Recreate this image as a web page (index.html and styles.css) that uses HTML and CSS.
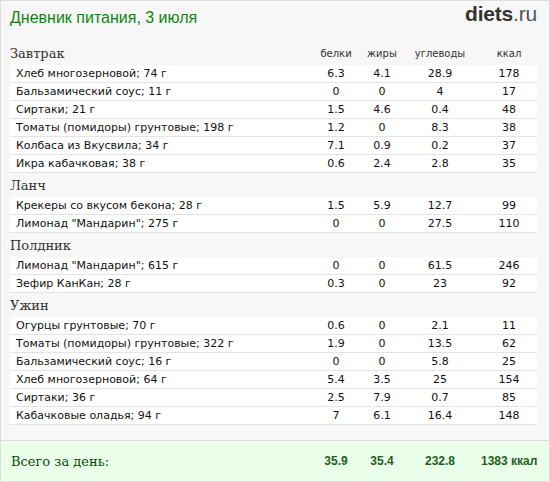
FILE: index.html
```html
<!DOCTYPE html>
<html lang="ru">
<head>
<meta charset="utf-8">
<title>Дневник питания</title>
<link rel="stylesheet" href="styles.css">
</head>
<body>
<div class="page">
  <div class="top">
    <div class="title">Дневник питания, 3 июля</div>
    <div class="logo"><b>diets</b>.ru</div>
  </div>
  <div class="content">
    <div class="head">
      <div class="meal">Завтрак</div>
      <div class="lbl">белки</div><div class="lbl">жиры</div><div class="lbl">углеводы</div><div class="lbl c4">ккал</div>
    </div>
    <div class="row"><div class="name">Хлеб многозерновой; 74 г</div><div>6.3</div><div>4.1</div><div>28.9</div><div class="c4">178</div></div>
    <div class="row"><div class="name">Бальзамический соус; 11 г</div><div>0</div><div>0</div><div>4</div><div class="c4">17</div></div>
    <div class="row"><div class="name">Сиртаки; 21 г</div><div>1.5</div><div>4.6</div><div>0.4</div><div class="c4">48</div></div>
    <div class="row"><div class="name">Томаты (помидоры) грунтовые; 198 г</div><div>1.2</div><div>0</div><div>8.3</div><div class="c4">38</div></div>
    <div class="row"><div class="name">Колбаса из Вкусвила; 34 г</div><div>7.1</div><div>0.9</div><div>0.2</div><div class="c4">37</div></div>
    <div class="row"><div class="name">Икра кабачковая; 38 г</div><div>0.6</div><div>2.4</div><div>2.8</div><div class="c4">35</div></div>

    <div class="head"><div class="meal">Ланч</div></div>
    <div class="row"><div class="name">Крекеры со вкусом бекона; 28 г</div><div>1.5</div><div>5.9</div><div>12.7</div><div class="c4">99</div></div>
    <div class="row"><div class="name">Лимонад "Мандарин"; 275 г</div><div>0</div><div>0</div><div>27.5</div><div class="c4">110</div></div>

    <div class="head"><div class="meal">Полдник</div></div>
    <div class="row"><div class="name">Лимонад "Мандарин"; 615 г</div><div>0</div><div>0</div><div>61.5</div><div class="c4">246</div></div>
    <div class="row"><div class="name">Зефир КанКан; 28 г</div><div>0.3</div><div>0</div><div>23</div><div class="c4">92</div></div>

    <div class="head"><div class="meal">Ужин</div></div>
    <div class="row"><div class="name">Огурцы грунтовые; 70 г</div><div>0.6</div><div>0</div><div>2.1</div><div class="c4">11</div></div>
    <div class="row"><div class="name">Томаты (помидоры) грунтовые; 322 г</div><div>1.9</div><div>0</div><div>13.5</div><div class="c4">62</div></div>
    <div class="row"><div class="name">Бальзамический соус; 16 г</div><div>0</div><div>0</div><div>5.8</div><div class="c4">25</div></div>
    <div class="row"><div class="name">Хлеб многозерновой; 64 г</div><div>5.4</div><div>3.5</div><div>25</div><div class="c4">154</div></div>
    <div class="row"><div class="name">Сиртаки; 36 г</div><div>2.5</div><div>7.9</div><div>0.7</div><div class="c4">85</div></div>
    <div class="row"><div class="name">Кабачковые оладья; 94 г</div><div>7</div><div>6.1</div><div>16.4</div><div class="c4">148</div></div>
  </div>
  <div class="total">
    <div class="total-label">Всего за день:</div>
    <div>35.9</div><div>35.4</div><div>232.8</div><div class="c4">1383 ккал</div>
  </div>
</div>
</body>
</html>
```

FILE: styles.css
```css
html, body {
  margin: 0;
  padding: 0;
}
body {
  width: 550px;
  height: 482px;
  background: #ffffff;
}
.page {
  box-sizing: border-box;
  width: 550px;
  height: 482px;
  border: 1px solid #dedede;
  background: #f7f7f7;
  display: flex;
  flex-direction: column;
}
.top {
  height: 40px;
  display: flex;
  justify-content: space-between;
  align-items: flex-start;
  padding: 0 12px 0 9px;
}
.title {
  font-family: "Liberation Sans", Arial, sans-serif;
  font-size: 16px;
  color: #0f850f;
  margin-top: 7px;
  line-height: 20px;
}
.logo {
  font-family: "Liberation Sans", Arial, sans-serif;
  font-size: 21px;
  color: #555;
  margin-top: 2px;
  line-height: 22px;
  letter-spacing: -0.2px;
}
.logo b {
  color: #333;
  font-weight: bold;
}
.content {
  padding: 0 12px 0 9px;
  flex: 1;
}
.head, .row, .total {
  display: grid;
  grid-template-columns: 1fr 46px 46px 70px 62px;
}
.head {
  height: 24px;
  align-items: end;
}
.meal {
  font-family: "DejaVu Serif", Georgia, serif;
  font-size: 13px;
  color: #333;
  line-height: 18px;
  padding-bottom: 2px;
}
.lbl {
  font-family: "DejaVu Sans", Verdana, sans-serif;
  font-size: 10px;
  color: #333;
  text-align: center;
  line-height: 14px;
  padding-bottom: 4px;
}
.row {
  height: 17px;
  background: #ffffff;
  border-bottom: 1px solid #e4e4e4;
  font-family: "DejaVu Sans", Verdana, sans-serif;
  font-size: 11px;
  color: #111;
  line-height: 17px;
  text-align: center;
}
.row .name {
  text-align: left;
  padding-left: 6px;
  white-space: nowrap;
}
.c4 {
  padding-left: 6px;
}
.total {
  height: 40px;
  border-top: 1px solid #dcdcdc;
  background: #eaffea;
  padding: 0 12px 0 9px;
  align-items: center;
  font-family: "Liberation Sans", Arial, sans-serif;
  font-weight: bold;
  font-size: 12px;
  color: #1d5e1d;
  text-align: center;
}
.total .c4 {
  white-space: nowrap;
}
.total-label {
  text-align: left;
  font-family: "DejaVu Serif", Georgia, serif;
  font-weight: normal;
  font-size: 13px;
  color: #0a4a0a;
  padding-left: 1px;
}
```
